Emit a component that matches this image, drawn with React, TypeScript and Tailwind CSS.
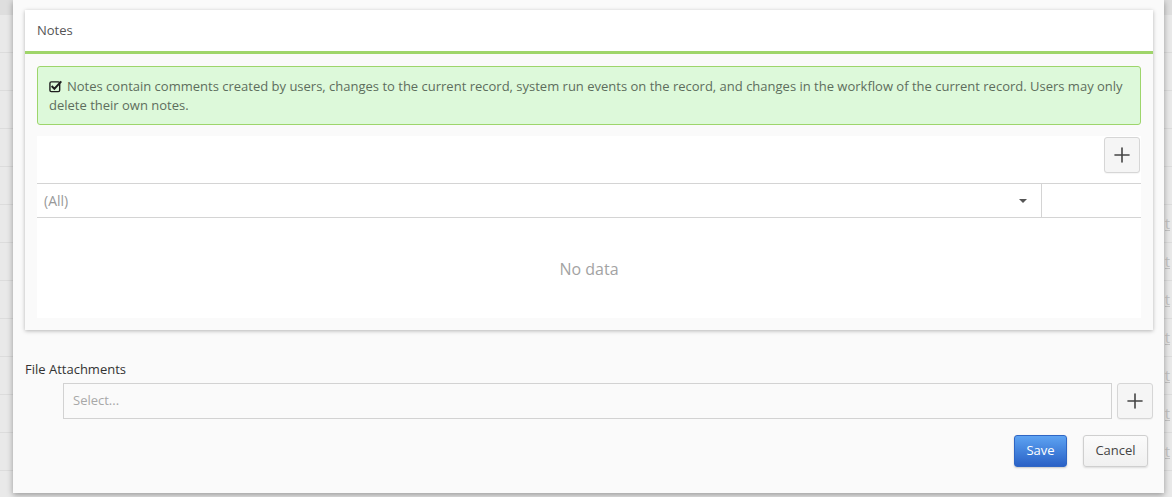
import { Plus } from 'lucide-react'

function CheckSquare() {
  return (
    <svg viewBox="0 0 14 14" className="w-[13px] h-[13px] inline-block mr-[5px] -mt-[3px] align-middle" fill="none">
      <rect x="1" y="2" width="10.5" height="10.5" rx="1.5" stroke="#1e1e1e" strokeWidth="1.5" />
      <path d="M3.6 7.2 L5.8 9.4 L12.6 2.2" stroke="#1e1e1e" strokeWidth="2.1" strokeLinecap="square" />
    </svg>
  )
}

function AddButton({ className }: { className?: string }) {
  return (
    <button
      className={
        'w-[36px] h-[36px] flex items-center justify-center bg-[#f5f5f5] border border-[#d6d6d6] rounded-[3px] text-[#444] shadow-[0_1px_1px_rgba(0,0,0,0.04)] ' +
        (className ?? '')
      }
    >
      <Plus className="w-[24px] h-[24px]" strokeWidth={1.6} />
    </button>
  )
}

function NotesPanel() {
  return (
    <div className="mt-[10px] ml-[12px] w-[1128px] bg-[#fafafa] shadow-[0_1px_4px_rgba(0,0,0,0.28)]">
      <div className="h-[44px] bg-white border-b-[3px] border-[#9fd56a] flex items-center px-[12px] text-[13px] text-[#555]">
        Notes
      </div>
      <div className="p-[12px]">
        <div className="border border-[#9dd56b] bg-[#ddf9da] rounded-[3px] px-[11px] pt-[10px] pb-[9px] text-[13px] leading-[19px] text-[#5d6e5d]">
          <CheckSquare />
          Notes contain comments created by users, changes to the current record, system run events on the record, and changes in the workflow of the current record. Users may only delete their own notes.
        </div>
        <div className="mt-[11px] bg-white">
          <div className="h-[47px] flex justify-end items-start pt-[1px] pr-[1px]">
            <AddButton />
          </div>
          <div className="flex h-[35px] border-y border-[#d4d4d4]">
            <div className="flex-1 flex items-center justify-between pl-[7px] pr-[14px] border-r border-[#d4d4d4] text-[14px] text-[#999]">
              <span>(All)</span>
              <span className="w-0 h-0 border-l-[4px] border-r-[4px] border-t-[4px] border-l-transparent border-r-transparent border-t-[#555]" />
            </div>
            <div className="w-[99px]" />
          </div>
          <div className="h-[100px] flex items-center justify-center text-[16px] text-[#a3a3a3] pt-[2px]">
            No data
          </div>
        </div>
      </div>
    </div>
  )
}

export default function App() {
  return (
    <div
      className="relative w-full h-[497px] bg-[#e9e9e9] overflow-hidden"
      style={{ fontFamily: '"Open Sans", "Noto Sans", sans-serif' }}
    >
      <div className="flex flex-col h-full">
        <div className="h-[15px] bg-[#dedede]" />
        {Array.from({ length: 12 }).map((_, i) => (
          <div key={i} className="h-[38px] border-b border-[#dcdcdc] flex items-center justify-end pr-[2px] text-[14px] text-[#c4c4c4]">
            <span className="underline">{i > 4 ? 't' : ''}</span>
          </div>
        ))}
      </div>

      <div className="absolute left-[13px] top-0 w-[1151px] h-[493px] bg-[#fafafa] shadow-[0_2px_6px_rgba(0,0,0,0.35)] flex flex-col">
        <NotesPanel />

        <div className="mt-[30px] ml-[12px] text-[13px] text-[#333] leading-[18px]">File Attachments</div>
        <div className="mt-[5px] ml-[50px] flex items-center gap-[5px]">
          <div className="w-[1049px] h-[36px] border border-[#d2d2d2] bg-[#fafafa] flex items-center px-[9px] text-[13px] text-[#a8a8a8]">
            Select...
          </div>
          <AddButton className="-mt-[1px]" />
        </div>

        <div className="mt-[16px] mr-[16px] flex justify-end gap-[16px]">
          <button className="w-[53px] h-[32px] rounded-[3px] border border-[#2f66c4] bg-gradient-to-b from-[#5ea3f2] to-[#2a61c6] text-white text-[13px] shadow-[0_1px_2px_rgba(0,0,0,0.2)]">
            Save
          </button>
          <button className="w-[65px] h-[32px] rounded-[3px] border border-[#cfcfcf] bg-gradient-to-b from-[#fbfbfb] to-[#f0f0f0] text-[#444] text-[13px] shadow-[0_1px_2px_rgba(0,0,0,0.12)]">
            Cancel
          </button>
        </div>
      </div>
    </div>
  )
}
